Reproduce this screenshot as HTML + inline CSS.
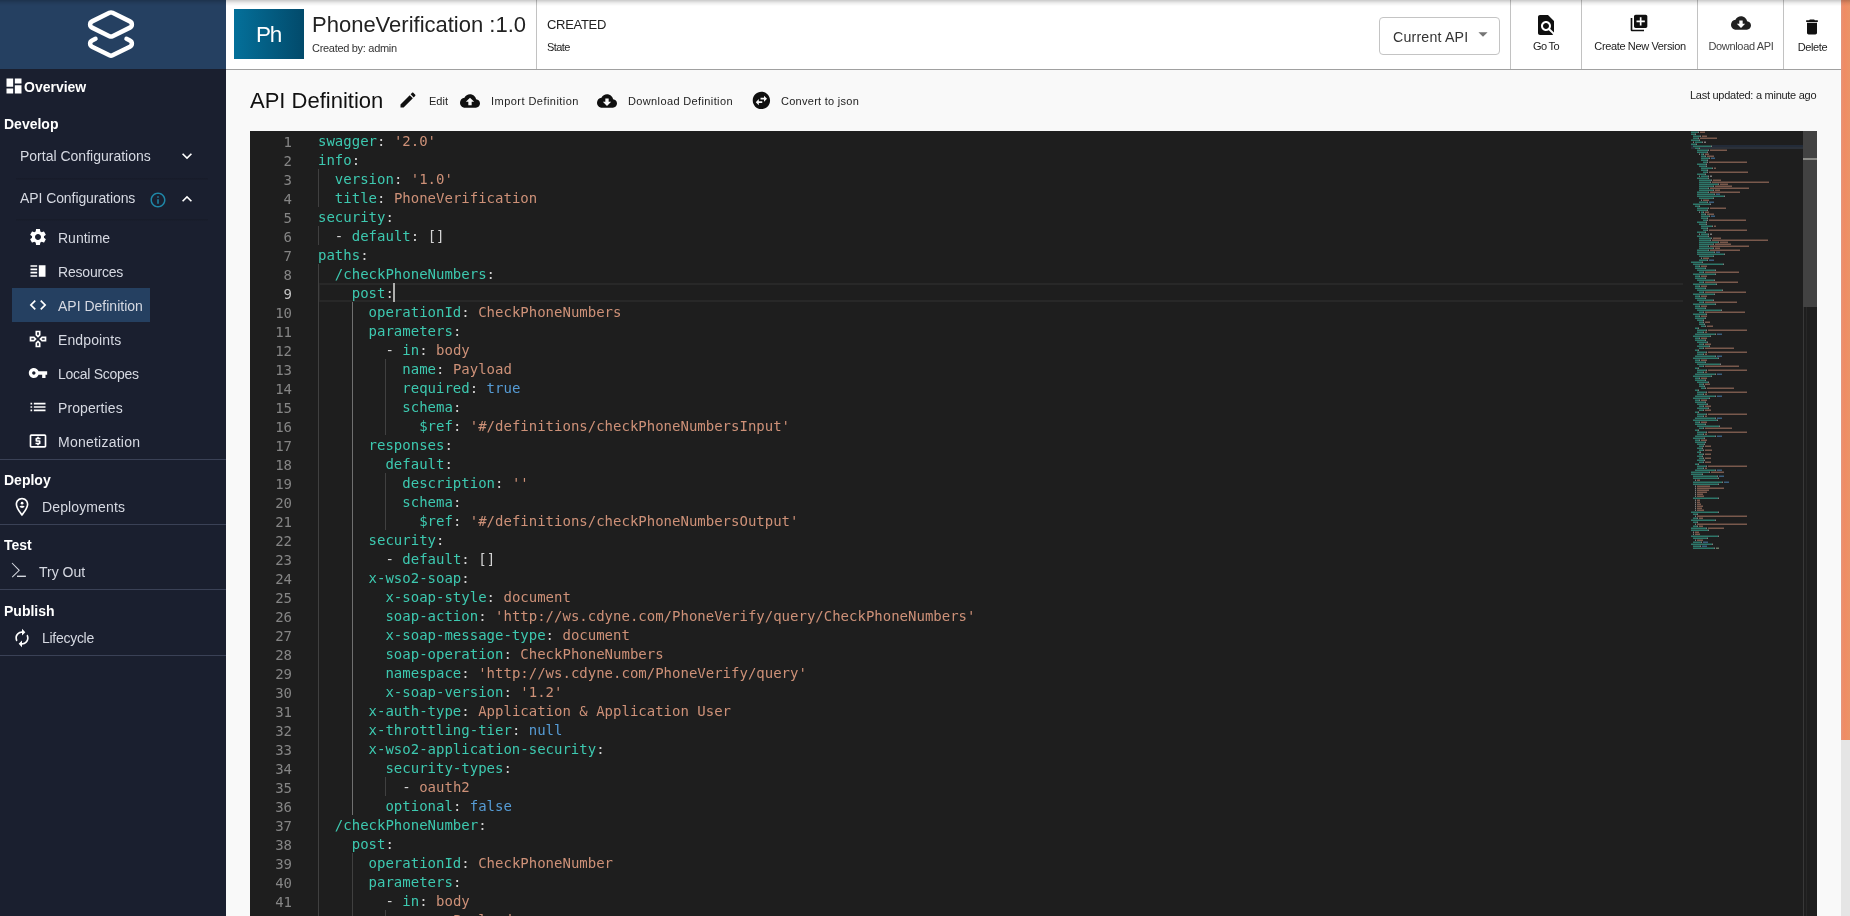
<!DOCTYPE html>
<html lang="en">
<head>
<meta charset="utf-8">
<title>PhoneVerification :1.0 - API Definition</title>
<style>
*{box-sizing:border-box;margin:0;padding:0}
html,body{width:1850px;height:916px;overflow:hidden;background:#f9f9f9}
body{position:relative;font-family:"Liberation Sans","DejaVu Sans",sans-serif;color:#222;font-size:14px}
.abs{position:absolute}
svg{display:block}
/* ---------- sidebar ---------- */
#side{position:absolute;left:0;top:0;width:226px;height:916px;background:#1a1f2f;color:#fff}
#logo{position:absolute;left:0;top:0;width:226px;height:69px;background:#254061}
.sec{position:absolute;left:4px;font-weight:bold;font-size:14px;line-height:20px;color:#fff;white-space:nowrap}
.item{position:absolute;font-size:14px;line-height:20px;color:#d6d9e2;white-space:nowrap}
.ico{position:absolute;fill:#fff}
.hr{position:absolute;left:0;width:226px;height:1px;background:#3a4156}
.sub{position:absolute;left:16px;width:192px;height:2px;background:linear-gradient(#171b29,#191e2d)}
#active{position:absolute;left:12px;top:288px;width:138px;height:34px;background:#254061}
/* ---------- header ---------- */
#head{position:absolute;left:226px;top:0;width:1615px;height:70px;background:#fff;border-bottom:1px solid #a0a0a0}
#topshadow{position:absolute;left:0;top:0;width:1850px;height:6px;background:linear-gradient(to bottom,rgba(0,0,0,.21),rgba(0,0,0,.07) 50%,rgba(0,0,0,0));pointer-events:none;z-index:50}
#thumb{position:absolute;left:8px;top:9px;width:70px;height:50px;background:linear-gradient(to right,#04709a,#024a6b);color:#fff;text-align:center}
.vd{position:absolute;top:0;width:1px;height:69px;background:#c2c2c2}
.t{position:absolute;white-space:nowrap;line-height:1}
.act{position:absolute;font-size:11px;white-space:nowrap;line-height:12px;color:#222;text-align:center}
.dk{fill:#101010}
/* ---------- page scrollbar ---------- */
#sbar{position:absolute;left:1841px;top:0;width:9px;height:916px;background:#e5e5e5}
#sthumb{position:absolute;left:0;top:0;width:9px;height:740px;background:linear-gradient(to right,#e3957c 0,#f08b63 3px,#ea9368 9px)}
/* ---------- editor ---------- */
#ed{position:absolute;left:250px;top:131px;width:1567px;height:785px;background:#1e1e1e;overflow:hidden;
 font-family:"DejaVu Sans Mono","Liberation Mono",monospace;font-size:14px;line-height:19px;color:#d4d4d4}
#nums{position:absolute;left:0;top:2px;width:42px;height:100%}
.no{position:absolute;left:0;width:42px;height:19px;text-align:right;color:#858585}
.no.cur{color:#c6c6c6}
#code{position:absolute;left:68px;top:1px;width:1380px;height:100%}
#guides{position:absolute;left:68px;top:0;width:400px;height:100%}
.ln{position:absolute;left:0;height:19px;white-space:pre}
.k{color:#3dc9b0}.s{color:#ce9178}.w{color:#569cd6}.n{color:#b5cea8}.d{color:#d4d4d4}
.g{position:absolute;width:1px;background:#404040}
.ga{background:#707070}
#curline{position:absolute;left:68px;top:152px;width:1365px;height:19px;border:2px solid #282828;border-right:0}
#caret{position:absolute;left:142.900px;top:152px;width:2px;height:19px;background:#aeafad}
#mm{position:absolute;left:1441px;top:0}
#vs{position:absolute;left:1553px;top:0;width:14px;height:785px;border-left:1px solid #383838}
#vsl{position:absolute;left:-1px;top:0;width:14px;height:176px;background:#424242}
#vmark{position:absolute;left:-1px;top:27px;width:14px;height:2px;background:#8c8c88}
</style>
</head>
<body>

<!-- ================= SIDEBAR ================= -->
<div id="side">
  <div id="logo">
    <svg class="abs" style="left:84px;top:6px" width="54" height="56" viewBox="0 0 54 56" fill="none" stroke="#fff" stroke-width="4.5" stroke-linejoin="round" stroke-linecap="round">
      <path d="M25.45 6.81 A3.5 3.5 0 0 1 28.55 6.81 L45.92 15.36 A3.5 3.5 0 0 1 45.92 21.64 L28.55 30.19 A3.5 3.5 0 0 1 25.45 30.19 L8.08 21.64 A3.5 3.5 0 0 1 8.08 15.36 Z"/>
      <path d="M11.5 32.78 L8.08 34.46 A3.5 3.5 0 0 0 8.08 40.74 L25.45 49.29 A3.5 3.5 0 0 0 28.55 49.29 L45.92 40.74 A3.5 3.5 0 0 0 45.92 34.46 L42.5 32.78"/>
    </svg>
  </div>

  <svg class="ico" style="left:4px;top:76px" width="20" height="20" viewBox="0 0 24 24"><path d="M3 13h8V3H3v10zm0 8h8v-6H3v6zm10 0h8V11h-8v10zm0-18v6h8V3h-8z"/></svg>
  <div class="item" style="left:24px;top:77px;font-weight:bold;color:#fff">Overview</div>

  <div class="sec" style="top:114px">Develop</div>

  <div class="item" style="left:20px;top:146px">Portal Configurations</div>
  <svg class="ico" style="left:177px;top:146px" width="20" height="20" viewBox="0 0 24 24"><path d="M16.59 8.59L12 13.17 7.41 8.59 6 10l6 6 6-6z"/></svg>
  <div class="sub" style="top:178px"></div>

  <div class="item" style="left:20px;top:188px;letter-spacing:-.08px">API Configurations</div>
  <svg class="ico" style="left:148.700px;top:190.700px;fill:#1f86a6" width="18" height="18" viewBox="0 0 24 24"><path d="M11 7h2v2h-2zm0 4h2v6h-2zm1-9C6.48 2 2 6.48 2 12s4.48 10 10 10 10-4.48 10-10S17.52 2 12 2zm0 18c-4.41 0-8-3.590-8-8s3.590-8 8-8 8 3.590 8 8-3.590 8-8 8z"/></svg>
  <svg class="ico" style="left:177px;top:189px" width="20" height="20" viewBox="0 0 24 24"><path d="M12 8l-6 6 1.41 1.41L12 10.830l4.590 4.580L18 14z"/></svg>
  <div class="sub" style="top:219px"></div>

  <div id="active"></div>

  <!-- Runtime -->
  <svg class="ico" style="left:28px;top:227px" width="20" height="20" viewBox="0 0 24 24"><path d="M19.140 12.940c.040-.3.060-.610.060-.940 0-.320-.020-.640-.070-.940l2.030-1.580c.180-.140.230-.410.120-.610l-1.920-3.320c-.120-.220-.370-.290-.590-.220l-2.390.960c-.5-.380-1.030-.7-1.620-.940l-.360-2.540c-.040-.240-.240-.410-.480-.410h-3.840c-.240 0-.430.170-.470.410l-.360 2.540c-.590.240-1.130.570-1.620.940l-2.390-.960c-.220-.080-.470 0-.590.220L2.740 8.870c-.120.210-.080.470.12.610l2.030 1.580c-.050.3-.090.630-.090.940s.020.640.070.940l-2.030 1.580c-.180.140-.230.410-.12.610l1.920 3.320c.120.220.370.290.590.220l2.390-.960c.5.380 1.030.7 1.620.940l.360 2.540c.050.240.240.410.480.410h3.840c.240 0 .440-.170.470-.410l.360-2.540c.590-.240 1.130-.560 1.620-.940l2.390.960c.220.080.470 0 .590-.220l1.920-3.320c.120-.220.070-.470-.120-.610l-2.010-1.580zM12 15.600c-1.980 0-3.600-1.620-3.600-3.600s1.620-3.600 3.600-3.600 3.600 1.620 3.600 3.600-1.620 3.600-3.600 3.600z"/></svg>
  <div class="item" style="left:58px;top:228px">Runtime</div>

  <!-- Resources -->
  <svg class="ico" style="left:28px;top:261px" width="20" height="20" viewBox="0 0 24 24"><path d="M3 15h8v-2H3v2zm0 4h8v-2H3v2zm0-8h8V9H3v2zm0-6v2h8V5H3zm10 0h8v14h-8V5z"/></svg>
  <div class="item" style="left:58px;top:262px;letter-spacing:-.2px">Resources</div>

  <!-- API Definition -->
  <svg class="ico" style="left:28px;top:295px" width="20" height="20" viewBox="0 0 24 24"><path d="M9.4 16.6L4.8 12l4.6-4.6L8 6l-6 6 6 6 1.4-1.4zm5.2 0l4.6-4.6-4.6-4.6L16 6l6 6-6 6-1.4-1.400z"/></svg>
  <div class="item" style="left:58px;top:296px">API Definition</div>

  <!-- Endpoints -->
  <svg class="ico" style="left:28px;top:329px" width="20" height="20" viewBox="0 0 24 24"><path d="M13 4v2.670l-1 1-1-1V4h2m7 7v2h-2.670l-1-1 1-1H20M6.670 11l1 1-1 1H4v-2h2.670M12 16.330l1 1V20h-2v-2.670l1-1M15 2H9v5.500l3 3 3-3V2zm7 7h-5.500l-3 3 3 3H22V9zM7.500 9H2v6h5.500l3-3-3-3zm4.500 4.500l-3 3V22h6v-5.500l-3-3z"/></svg>
  <div class="item" style="left:58px;top:330px;letter-spacing:.12px">Endpoints</div>

  <!-- Local Scopes -->
  <svg class="ico" style="left:28px;top:363px" width="20" height="20" viewBox="0 0 24 24"><path d="M12.650 10C11.830 7.670 9.610 6 7 6c-3.310 0-6 2.690-6 6s2.690 6 6 6c2.610 0 4.830-1.670 5.650-4H17v4h4v-4h2v-4H12.650zM7 14c-1.100 0-2-.9-2-2s.9-2 2-2 2 .9 2 2-.9 2-2 2z"/></svg>
  <div class="item" style="left:58px;top:364px;letter-spacing:-.27px">Local Scopes</div>

  <!-- Properties -->
  <svg class="ico" style="left:28px;top:397px" width="20" height="20" viewBox="0 0 24 24"><path d="M3 13h2v-2H3v2zm0 4h2v-2H3v2zm0-8h2V7H3v2zm4 4h14v-2H7v2zm0 4h14v-2H7v2zM7 7v2h14V7H7z"/></svg>
  <div class="item" style="left:58px;top:398px;letter-spacing:.1px">Properties</div>

  <!-- Monetization -->
  <svg class="ico" style="left:28px;top:431px" width="20" height="20" viewBox="0 0 24 24"><path d="M11 17h2v-1h1c.55 0 1-.45 1-1v-3c0-.55-.45-1-1-1h-3v-1h4V8h-2V7h-2v1h-1c-.55 0-1 .45-1 1v3c0 .55.45 1 1 1h3v1H9v2h2v1zm9-13H4c-1.110 0-1.990.890-1.990 2L2 18c0 1.110.890 2 2 2h16c1.110 0 2-.890 2-2V6c0-1.110-.890-2-2-2zm0 14H4V6h16v12z"/></svg>
  <div class="item" style="left:58px;top:432px;letter-spacing:.24px">Monetization</div>

  <div class="hr" style="top:459px"></div>
  <div class="sec" style="top:470px">Deploy</div>
  <svg class="ico" style="left:10.6px;top:496px" width="22" height="22" viewBox="0 0 24 24"><path fill-rule="evenodd" d="M12 2C8.14 2 5 5.14 5 9c0 5.25 7 13 7 13s7-7.75 7-13c0-3.86-3.14-7-7-7zM12 3.800c-2.870 0-5.200 2.330-5.200 5.200 0 2.950 3 7.400 5.200 10.200 2.200-2.800 5.200-7.250 5.200-10.200 0-2.870-2.330-5.200-5.200-5.200z"/><circle cx="12.100" cy="7.900" r="1.500"/><path d="M12.100 10.500c-1.300 0-2.800.560-2.800 1.350.66.720 1.650 1.150 2.800 1.150s2.140-.430 2.800-1.150c0-.790-1.500-1.350-2.800-1.350z"/></svg>
  <div class="item" style="left:42px;top:497px;letter-spacing:.12px">Deployments</div>

  <div class="hr" style="top:524px"></div>
  <div class="sec" style="top:535px">Test</div>
  <svg class="abs" style="left:10px;top:561px" width="20" height="20" viewBox="0 0 20 20" fill="none" stroke="#d4d7df"><path stroke-width="1.05" d="M2 2 L9.200 9.300 L2.200 16.200"/><path stroke-width="1.400" d="M7 15.300 H15.900"/></svg>
  <div class="item" style="left:39px;top:562px">Try Out</div>

  <div class="hr" style="top:589px"></div>
  <div class="sec" style="top:601px">Publish</div>
  <svg class="ico" style="left:12px;top:628px" width="20" height="20" viewBox="0 0 24 24"><path d="M12 6v3l4-4-4-4v3c-4.420 0-8 3.580-8 8 0 1.570.460 3.030 1.240 4.260L6.700 14.800c-.45-.830-.7-1.790-.7-2.800 0-3.310 2.690-6 6-6zm6.760 1.740L17.300 9.200c.44.840.7 1.790.7 2.800 0 3.310-2.690 6-6 6v-3l-4 4 4 4v-3c4.420 0 8-3.580 8-8 0-1.570-.460-3.030-1.240-4.260z"/></svg>
  <div class="item" style="left:42px;top:628px;letter-spacing:-.28px">Lifecycle</div>
  <div class="hr" style="top:655px"></div>
</div>

<!-- ================= HEADER ================= -->
<div id="head">
  <div id="thumb"><span class="t" style="left:22px;top:15px;font-size:22.5px;letter-spacing:-1.3px">Ph</span></div>
  <div class="t" style="left:86px;top:14px;font-size:22px;color:#222">PhoneVerification :1.0</div>
  <div class="t" style="left:86px;top:43px;font-size:11px;letter-spacing:-.3px;color:#333">Created by: admin</div>
  <div class="vd" style="left:310px"></div>
  <div class="t" style="left:321px;top:18px;font-size:13px;letter-spacing:-.3px;color:#222">CREATED</div>
  <div class="t" style="left:321px;top:42px;font-size:11px;letter-spacing:-.6px;color:#222">State</div>

  <div class="abs" style="left:1153px;top:17px;width:121px;height:38px;border:1px solid #c4c4c4;border-radius:4px"></div>
  <div class="t" style="left:1167px;top:30px;font-size:14.2px;letter-spacing:.18px;color:#333">Current API</div>
  <svg class="abs" style="left:1246px;top:23px;fill:#757575" width="22" height="22" viewBox="0 0 24 24"><path d="M7 10l5 5 5-5z"/></svg>

  <div class="vd" style="left:1284px"></div>
  <svg class="abs dk" style="left:1308px;top:13px" width="24" height="24" viewBox="0 0 24 24"><path d="M20 19.590V8l-6-6H6c-1.100 0-1.990.9-1.990 2L4 20c0 1.100.890 2 1.990 2H18c.450 0 .850-.150 1.190-.4l-4.430-4.430c-.8.520-1.740.830-2.760.830-2.760 0-5-2.240-5-5s2.240-5 5-5 5 2.240 5 5c0 1.020-.310 1.960-.830 2.750L20 19.590zM9 13c0 1.660 1.340 3 3 3s3-1.340 3-3-1.340-3-3-3-3 1.340-3 3z"/></svg>
  <div class="act" style="left:1285px;top:40px;width:70px;letter-spacing:-.55px;word-spacing:-.5px">Go To</div>

  <div class="vd" style="left:1355px"></div>
  <svg class="abs dk" style="left:1403px;top:13px" width="20" height="20" viewBox="0 0 24 24"><path d="M4 6H2v14c0 1.100.9 2 2 2h14v-2H4V6zm16-4H8c-1.100 0-2 .9-2 2v12c0 1.100.9 2 2 2h12c1.100 0 2-.9 2-2V4c0-1.100-.9-2-2-2zm-1 9h-4v4h-2v-4H9V9h4V5h2v4h4v2z"/></svg>
  <div class="act" style="left:1356px;top:40px;width:115px;letter-spacing:-.36px;padding-left:1px">Create New Version</div>

  <div class="vd" style="left:1471px"></div>
  <svg class="abs" style="left:1505px;top:13px;fill:#202020" width="20" height="20" viewBox="0 0 24 24"><path d="M19.350 10.040C18.670 6.590 15.640 4 12 4 9.110 4 6.600 5.640 5.350 8.040 2.340 8.360 0 10.910 0 14c0 3.310 2.690 6 6 6h13c2.760 0 5-2.240 5-5 0-2.640-2.050-4.780-4.650-4.960zM17 13l-5 5-5-5h3V9h4v4h3z"/></svg>
  <div class="act" style="left:1472px;top:40px;width:85px;color:#444;letter-spacing:-.33px;padding-left:1px">Download API</div>

  <div class="vd" style="left:1557px"></div>
  <svg class="abs dk" style="left:1576px;top:17px" width="20" height="20" viewBox="0 0 24 24"><path d="M6 19c0 1.100.9 2 2 2h8c1.100 0 2-.9 2-2V7H6v12zM19 4h-3.500l-1-1h-5l-1 1H5v2h14V4z"/></svg>
  <div class="act" style="left:1558px;top:41px;width:56px;letter-spacing:-.35px;padding-left:1px">Delete</div>
</div>

<!-- ================= TITLE BAR ================= -->
<div class="t" style="left:250px;top:90px;font-size:22px;color:#111">API Definition</div>

<svg class="abs dk" style="left:398px;top:90px" width="20" height="20" viewBox="0 0 24 24"><path d="M3 17.250V21h3.750L17.810 9.940l-3.750-3.750L3 17.250zM20.710 7.040c.39-.39.39-1.020 0-1.410l-2.340-2.340c-.39-.39-1.020-.39-1.410 0l-1.830 1.830 3.750 3.750 1.830-1.830z"/></svg>
<div class="t" style="left:429px;top:96px;font-size:11px">Edit</div>

<svg class="abs dk" style="left:460px;top:91px" width="20" height="20" viewBox="0 0 24 24"><path d="M19.350 10.040C18.670 6.590 15.640 4 12 4 9.110 4 6.600 5.640 5.350 8.040 2.340 8.360 0 10.910 0 14c0 3.310 2.690 6 6 6h13c2.760 0 5-2.240 5-5 0-2.640-2.050-4.780-4.650-4.960zM14 13v4h-4v-4H7l5-5 5 5h-3z"/></svg>
<div class="t" style="left:491px;top:96px;font-size:11px;letter-spacing:.46px">Import Definition</div>

<svg class="abs dk" style="left:597px;top:91px" width="20" height="20" viewBox="0 0 24 24"><path d="M19.350 10.040C18.670 6.590 15.640 4 12 4 9.110 4 6.600 5.640 5.350 8.040 2.340 8.360 0 10.910 0 14c0 3.310 2.690 6 6 6h13c2.760 0 5-2.240 5-5 0-2.640-2.050-4.780-4.650-4.960zM17 13l-5 5-5-5h3V9h4v4h3z"/></svg>
<div class="t" style="left:628px;top:96px;font-size:11px;letter-spacing:.37px">Download Definition</div>

<svg class="abs dk" style="left:750.600px;top:90.300px" width="20.800" height="20.800" viewBox="0 0 24 24"><path d="M22 12c0-5.520-4.480-10-10-10S2 6.480 2 12s4.480 10 10 10 10-4.480 10-10zm-7-5.500l3.500 3.500-3.500 3.500V11h-4V9h4V6.500zm-6 11L5.500 14 9 10.500V13h4v2H9v2.500z"/></svg>
<div class="t" style="left:781px;top:96px;font-size:11px;letter-spacing:.27px">Convert to json</div>

<div class="t" style="left:1690px;top:90px;font-size:11px;letter-spacing:-.27px">Last updated: a minute ago</div>

<!-- ================= EDITOR ================= -->
<div id="ed">
  <div id="nums">
<div class="no" style="top:0px">1</div>
<div class="no" style="top:19px">2</div>
<div class="no" style="top:38px">3</div>
<div class="no" style="top:57px">4</div>
<div class="no" style="top:76px">5</div>
<div class="no" style="top:95px">6</div>
<div class="no" style="top:114px">7</div>
<div class="no" style="top:133px">8</div>
<div class="no cur" style="top:152px">9</div>
<div class="no" style="top:171px">10</div>
<div class="no" style="top:190px">11</div>
<div class="no" style="top:209px">12</div>
<div class="no" style="top:228px">13</div>
<div class="no" style="top:247px">14</div>
<div class="no" style="top:266px">15</div>
<div class="no" style="top:285px">16</div>
<div class="no" style="top:304px">17</div>
<div class="no" style="top:323px">18</div>
<div class="no" style="top:342px">19</div>
<div class="no" style="top:361px">20</div>
<div class="no" style="top:380px">21</div>
<div class="no" style="top:399px">22</div>
<div class="no" style="top:418px">23</div>
<div class="no" style="top:437px">24</div>
<div class="no" style="top:456px">25</div>
<div class="no" style="top:475px">26</div>
<div class="no" style="top:494px">27</div>
<div class="no" style="top:513px">28</div>
<div class="no" style="top:532px">29</div>
<div class="no" style="top:551px">30</div>
<div class="no" style="top:570px">31</div>
<div class="no" style="top:589px">32</div>
<div class="no" style="top:608px">33</div>
<div class="no" style="top:627px">34</div>
<div class="no" style="top:646px">35</div>
<div class="no" style="top:665px">36</div>
<div class="no" style="top:684px">37</div>
<div class="no" style="top:703px">38</div>
<div class="no" style="top:722px">39</div>
<div class="no" style="top:741px">40</div>
<div class="no" style="top:760px">41</div>
<div class="no" style="top:779px">42</div>
  </div>
  <div id="curline"></div>
  <div id="guides">
<i class="g" style="left:0.00px;top:38px;height:38px"></i>
<i class="g" style="left:0.00px;top:95px;height:19px"></i>
<i class="g" style="left:0.00px;top:133px;height:665px"></i>
<i class="g ga" style="left:33.71px;top:171px;height:513px"></i>
<i class="g" style="left:33.71px;top:722px;height:76px"></i>
<i class="g" style="left:67.43px;top:228px;height:76px"></i>
<i class="g" style="left:67.43px;top:342px;height:57px"></i>
<i class="g" style="left:67.43px;top:646px;height:19px"></i>
<i class="g" style="left:67.43px;top:779px;height:19px"></i>
  </div>
  <div id="code">
<div class="ln" style="top:0px"><span class="k">swagger</span><span class="d">:</span> <span class="s">'2.0'</span></div>
<div class="ln" style="top:19px"><span class="k">info</span><span class="d">:</span></div>
<div class="ln" style="top:38px">  <span class="k">version</span><span class="d">:</span> <span class="s">'1.0'</span></div>
<div class="ln" style="top:57px">  <span class="k">title</span><span class="d">:</span> <span class="s">PhoneVerification</span></div>
<div class="ln" style="top:76px"><span class="k">security</span><span class="d">:</span></div>
<div class="ln" style="top:95px">  <span class="d">-</span> <span class="k">default</span><span class="d">:</span> <span class="d">[]</span></div>
<div class="ln" style="top:114px"><span class="k">paths</span><span class="d">:</span></div>
<div class="ln" style="top:133px">  <span class="k">/checkPhoneNumbers</span><span class="d">:</span></div>
<div class="ln" style="top:152px">    <span class="k">post</span><span class="d">:</span></div>
<div class="ln" style="top:171px">      <span class="k">operationId</span><span class="d">:</span> <span class="s">CheckPhoneNumbers</span></div>
<div class="ln" style="top:190px">      <span class="k">parameters</span><span class="d">:</span></div>
<div class="ln" style="top:209px">        <span class="d">-</span> <span class="k">in</span><span class="d">:</span> <span class="s">body</span></div>
<div class="ln" style="top:228px">          <span class="k">name</span><span class="d">:</span> <span class="s">Payload</span></div>
<div class="ln" style="top:247px">          <span class="k">required</span><span class="d">:</span> <span class="w">true</span></div>
<div class="ln" style="top:266px">          <span class="k">schema</span><span class="d">:</span></div>
<div class="ln" style="top:285px">            <span class="k">$ref</span><span class="d">:</span> <span class="s">'#/definitions/checkPhoneNumbersInput'</span></div>
<div class="ln" style="top:304px">      <span class="k">responses</span><span class="d">:</span></div>
<div class="ln" style="top:323px">        <span class="k">default</span><span class="d">:</span></div>
<div class="ln" style="top:342px">          <span class="k">description</span><span class="d">:</span> <span class="s">''</span></div>
<div class="ln" style="top:361px">          <span class="k">schema</span><span class="d">:</span></div>
<div class="ln" style="top:380px">            <span class="k">$ref</span><span class="d">:</span> <span class="s">'#/definitions/checkPhoneNumbersOutput'</span></div>
<div class="ln" style="top:399px">      <span class="k">security</span><span class="d">:</span></div>
<div class="ln" style="top:418px">        <span class="d">-</span> <span class="k">default</span><span class="d">:</span> <span class="d">[]</span></div>
<div class="ln" style="top:437px">      <span class="k">x-wso2-soap</span><span class="d">:</span></div>
<div class="ln" style="top:456px">        <span class="k">x-soap-style</span><span class="d">:</span> <span class="s">document</span></div>
<div class="ln" style="top:475px">        <span class="k">soap-action</span><span class="d">:</span> <span class="s">'http://ws.cdyne.com/PhoneVerify/query/CheckPhoneNumbers'</span></div>
<div class="ln" style="top:494px">        <span class="k">x-soap-message-type</span><span class="d">:</span> <span class="s">document</span></div>
<div class="ln" style="top:513px">        <span class="k">soap-operation</span><span class="d">:</span> <span class="s">CheckPhoneNumbers</span></div>
<div class="ln" style="top:532px">        <span class="k">namespace</span><span class="d">:</span> <span class="s">'http://ws.cdyne.com/PhoneVerify/query'</span></div>
<div class="ln" style="top:551px">        <span class="k">x-soap-version</span><span class="d">:</span> <span class="s">'1.2'</span></div>
<div class="ln" style="top:570px">      <span class="k">x-auth-type</span><span class="d">:</span> <span class="s">Application &amp; Application User</span></div>
<div class="ln" style="top:589px">      <span class="k">x-throttling-tier</span><span class="d">:</span> <span class="w">null</span></div>
<div class="ln" style="top:608px">      <span class="k">x-wso2-application-security</span><span class="d">:</span></div>
<div class="ln" style="top:627px">        <span class="k">security-types</span><span class="d">:</span></div>
<div class="ln" style="top:646px">          <span class="d">-</span> <span class="s">oauth2</span></div>
<div class="ln" style="top:665px">        <span class="k">optional</span><span class="d">:</span> <span class="w">false</span></div>
<div class="ln" style="top:684px">  <span class="k">/checkPhoneNumber</span><span class="d">:</span></div>
<div class="ln" style="top:703px">    <span class="k">post</span><span class="d">:</span></div>
<div class="ln" style="top:722px">      <span class="k">operationId</span><span class="d">:</span> <span class="s">CheckPhoneNumber</span></div>
<div class="ln" style="top:741px">      <span class="k">parameters</span><span class="d">:</span></div>
<div class="ln" style="top:760px">        <span class="d">-</span> <span class="k">in</span><span class="d">:</span> <span class="s">body</span></div>
<div class="ln" style="top:779px">          <span class="k">name</span><span class="d">:</span> <span class="s">Payload</span></div>
  </div>
  <div id="caret"></div>
  <svg id="mm" width="112" height="785" viewBox="0 0 112 785" shape-rendering="crispEdges" opacity=".56">
    <rect x="0" y="16" width="112" height="2" fill="#264f78" opacity=".0"/>
<rect x="0" y="0" width="7" height="2" fill="#3dc9b0"/>
<rect x="7" y="0" width="1" height="2" fill="#d4d4d4"/>
<rect x="9" y="0" width="5" height="2" fill="#ce9178"/>
<rect x="0" y="2" width="4" height="2" fill="#3dc9b0"/>
<rect x="4" y="2" width="1" height="2" fill="#d4d4d4"/>
<rect x="2" y="4" width="7" height="2" fill="#3dc9b0"/>
<rect x="9" y="4" width="1" height="2" fill="#d4d4d4"/>
<rect x="11" y="4" width="5" height="2" fill="#ce9178"/>
<rect x="2" y="6" width="5" height="2" fill="#3dc9b0"/>
<rect x="7" y="6" width="1" height="2" fill="#d4d4d4"/>
<rect x="9" y="6" width="17" height="2" fill="#ce9178"/>
<rect x="0" y="8" width="8" height="2" fill="#3dc9b0"/>
<rect x="8" y="8" width="1" height="2" fill="#d4d4d4"/>
<rect x="2" y="10" width="1" height="2" fill="#d4d4d4"/>
<rect x="4" y="10" width="7" height="2" fill="#3dc9b0"/>
<rect x="11" y="10" width="1" height="2" fill="#d4d4d4"/>
<rect x="13" y="10" width="2" height="2" fill="#d4d4d4"/>
<rect x="0" y="12" width="5" height="2" fill="#3dc9b0"/>
<rect x="5" y="12" width="1" height="2" fill="#d4d4d4"/>
<rect x="2" y="14" width="18" height="2" fill="#3dc9b0"/>
<rect x="20" y="14" width="1" height="2" fill="#d4d4d4"/>
<rect x="4" y="16" width="4" height="2" fill="#3dc9b0"/>
<rect x="8" y="16" width="1" height="2" fill="#d4d4d4"/>
<rect x="6" y="18" width="11" height="2" fill="#3dc9b0"/>
<rect x="17" y="18" width="1" height="2" fill="#d4d4d4"/>
<rect x="19" y="18" width="17" height="2" fill="#ce9178"/>
<rect x="6" y="20" width="10" height="2" fill="#3dc9b0"/>
<rect x="16" y="20" width="1" height="2" fill="#d4d4d4"/>
<rect x="8" y="22" width="1" height="2" fill="#d4d4d4"/>
<rect x="10" y="22" width="2" height="2" fill="#3dc9b0"/>
<rect x="12" y="22" width="1" height="2" fill="#d4d4d4"/>
<rect x="14" y="22" width="4" height="2" fill="#ce9178"/>
<rect x="10" y="24" width="4" height="2" fill="#3dc9b0"/>
<rect x="14" y="24" width="1" height="2" fill="#d4d4d4"/>
<rect x="16" y="24" width="7" height="2" fill="#ce9178"/>
<rect x="10" y="26" width="8" height="2" fill="#3dc9b0"/>
<rect x="18" y="26" width="1" height="2" fill="#d4d4d4"/>
<rect x="20" y="26" width="4" height="2" fill="#569cd6"/>
<rect x="10" y="28" width="6" height="2" fill="#3dc9b0"/>
<rect x="16" y="28" width="1" height="2" fill="#d4d4d4"/>
<rect x="12" y="30" width="4" height="2" fill="#3dc9b0"/>
<rect x="16" y="30" width="1" height="2" fill="#d4d4d4"/>
<rect x="18" y="30" width="38" height="2" fill="#ce9178"/>
<rect x="6" y="32" width="9" height="2" fill="#3dc9b0"/>
<rect x="15" y="32" width="1" height="2" fill="#d4d4d4"/>
<rect x="8" y="34" width="7" height="2" fill="#3dc9b0"/>
<rect x="15" y="34" width="1" height="2" fill="#d4d4d4"/>
<rect x="10" y="36" width="11" height="2" fill="#3dc9b0"/>
<rect x="21" y="36" width="1" height="2" fill="#d4d4d4"/>
<rect x="23" y="36" width="2" height="2" fill="#ce9178"/>
<rect x="10" y="38" width="6" height="2" fill="#3dc9b0"/>
<rect x="16" y="38" width="1" height="2" fill="#d4d4d4"/>
<rect x="12" y="40" width="4" height="2" fill="#3dc9b0"/>
<rect x="16" y="40" width="1" height="2" fill="#d4d4d4"/>
<rect x="18" y="40" width="39" height="2" fill="#ce9178"/>
<rect x="6" y="42" width="8" height="2" fill="#3dc9b0"/>
<rect x="14" y="42" width="1" height="2" fill="#d4d4d4"/>
<rect x="8" y="44" width="1" height="2" fill="#d4d4d4"/>
<rect x="10" y="44" width="7" height="2" fill="#3dc9b0"/>
<rect x="17" y="44" width="1" height="2" fill="#d4d4d4"/>
<rect x="19" y="44" width="2" height="2" fill="#d4d4d4"/>
<rect x="6" y="46" width="11" height="2" fill="#3dc9b0"/>
<rect x="17" y="46" width="1" height="2" fill="#d4d4d4"/>
<rect x="8" y="48" width="12" height="2" fill="#3dc9b0"/>
<rect x="20" y="48" width="1" height="2" fill="#d4d4d4"/>
<rect x="22" y="48" width="8" height="2" fill="#ce9178"/>
<rect x="8" y="50" width="11" height="2" fill="#3dc9b0"/>
<rect x="19" y="50" width="1" height="2" fill="#d4d4d4"/>
<rect x="21" y="50" width="57" height="2" fill="#ce9178"/>
<rect x="8" y="52" width="19" height="2" fill="#3dc9b0"/>
<rect x="27" y="52" width="1" height="2" fill="#d4d4d4"/>
<rect x="29" y="52" width="8" height="2" fill="#ce9178"/>
<rect x="8" y="54" width="14" height="2" fill="#3dc9b0"/>
<rect x="22" y="54" width="1" height="2" fill="#d4d4d4"/>
<rect x="24" y="54" width="17" height="2" fill="#ce9178"/>
<rect x="8" y="56" width="9" height="2" fill="#3dc9b0"/>
<rect x="17" y="56" width="1" height="2" fill="#d4d4d4"/>
<rect x="19" y="56" width="39" height="2" fill="#ce9178"/>
<rect x="8" y="58" width="14" height="2" fill="#3dc9b0"/>
<rect x="22" y="58" width="1" height="2" fill="#d4d4d4"/>
<rect x="24" y="58" width="5" height="2" fill="#ce9178"/>
<rect x="6" y="60" width="11" height="2" fill="#3dc9b0"/>
<rect x="17" y="60" width="1" height="2" fill="#d4d4d4"/>
<rect x="19" y="60" width="30" height="2" fill="#ce9178"/>
<rect x="6" y="62" width="17" height="2" fill="#3dc9b0"/>
<rect x="23" y="62" width="1" height="2" fill="#d4d4d4"/>
<rect x="25" y="62" width="4" height="2" fill="#569cd6"/>
<rect x="6" y="64" width="27" height="2" fill="#3dc9b0"/>
<rect x="33" y="64" width="1" height="2" fill="#d4d4d4"/>
<rect x="8" y="66" width="14" height="2" fill="#3dc9b0"/>
<rect x="22" y="66" width="1" height="2" fill="#d4d4d4"/>
<rect x="10" y="68" width="1" height="2" fill="#d4d4d4"/>
<rect x="12" y="68" width="6" height="2" fill="#ce9178"/>
<rect x="8" y="70" width="8" height="2" fill="#3dc9b0"/>
<rect x="16" y="70" width="1" height="2" fill="#d4d4d4"/>
<rect x="18" y="70" width="5" height="2" fill="#569cd6"/>
<rect x="2" y="72" width="17" height="2" fill="#3dc9b0"/>
<rect x="19" y="72" width="1" height="2" fill="#d4d4d4"/>
<rect x="4" y="74" width="4" height="2" fill="#3dc9b0"/>
<rect x="8" y="74" width="1" height="2" fill="#d4d4d4"/>
<rect x="6" y="76" width="11" height="2" fill="#3dc9b0"/>
<rect x="17" y="76" width="1" height="2" fill="#d4d4d4"/>
<rect x="19" y="76" width="16" height="2" fill="#ce9178"/>
<rect x="6" y="78" width="10" height="2" fill="#3dc9b0"/>
<rect x="16" y="78" width="1" height="2" fill="#d4d4d4"/>
<rect x="8" y="80" width="1" height="2" fill="#d4d4d4"/>
<rect x="10" y="80" width="2" height="2" fill="#3dc9b0"/>
<rect x="12" y="80" width="1" height="2" fill="#d4d4d4"/>
<rect x="14" y="80" width="4" height="2" fill="#ce9178"/>
<rect x="10" y="82" width="4" height="2" fill="#3dc9b0"/>
<rect x="14" y="82" width="1" height="2" fill="#d4d4d4"/>
<rect x="16" y="82" width="7" height="2" fill="#ce9178"/>
<rect x="10" y="84" width="8" height="2" fill="#3dc9b0"/>
<rect x="18" y="84" width="1" height="2" fill="#d4d4d4"/>
<rect x="20" y="84" width="4" height="2" fill="#569cd6"/>
<rect x="10" y="86" width="6" height="2" fill="#3dc9b0"/>
<rect x="16" y="86" width="1" height="2" fill="#d4d4d4"/>
<rect x="12" y="88" width="4" height="2" fill="#3dc9b0"/>
<rect x="16" y="88" width="1" height="2" fill="#d4d4d4"/>
<rect x="18" y="88" width="37" height="2" fill="#ce9178"/>
<rect x="6" y="90" width="9" height="2" fill="#3dc9b0"/>
<rect x="15" y="90" width="1" height="2" fill="#d4d4d4"/>
<rect x="8" y="92" width="7" height="2" fill="#3dc9b0"/>
<rect x="15" y="92" width="1" height="2" fill="#d4d4d4"/>
<rect x="10" y="94" width="11" height="2" fill="#3dc9b0"/>
<rect x="21" y="94" width="1" height="2" fill="#d4d4d4"/>
<rect x="23" y="94" width="2" height="2" fill="#ce9178"/>
<rect x="10" y="96" width="6" height="2" fill="#3dc9b0"/>
<rect x="16" y="96" width="1" height="2" fill="#d4d4d4"/>
<rect x="12" y="98" width="4" height="2" fill="#3dc9b0"/>
<rect x="16" y="98" width="1" height="2" fill="#d4d4d4"/>
<rect x="18" y="98" width="38" height="2" fill="#ce9178"/>
<rect x="6" y="100" width="8" height="2" fill="#3dc9b0"/>
<rect x="14" y="100" width="1" height="2" fill="#d4d4d4"/>
<rect x="8" y="102" width="1" height="2" fill="#d4d4d4"/>
<rect x="10" y="102" width="7" height="2" fill="#3dc9b0"/>
<rect x="17" y="102" width="1" height="2" fill="#d4d4d4"/>
<rect x="19" y="102" width="2" height="2" fill="#d4d4d4"/>
<rect x="6" y="104" width="11" height="2" fill="#3dc9b0"/>
<rect x="17" y="104" width="1" height="2" fill="#d4d4d4"/>
<rect x="8" y="106" width="12" height="2" fill="#3dc9b0"/>
<rect x="20" y="106" width="1" height="2" fill="#d4d4d4"/>
<rect x="22" y="106" width="8" height="2" fill="#ce9178"/>
<rect x="8" y="108" width="11" height="2" fill="#3dc9b0"/>
<rect x="19" y="108" width="1" height="2" fill="#d4d4d4"/>
<rect x="21" y="108" width="56" height="2" fill="#ce9178"/>
<rect x="8" y="110" width="19" height="2" fill="#3dc9b0"/>
<rect x="27" y="110" width="1" height="2" fill="#d4d4d4"/>
<rect x="29" y="110" width="8" height="2" fill="#ce9178"/>
<rect x="8" y="112" width="14" height="2" fill="#3dc9b0"/>
<rect x="22" y="112" width="1" height="2" fill="#d4d4d4"/>
<rect x="24" y="112" width="16" height="2" fill="#ce9178"/>
<rect x="8" y="114" width="9" height="2" fill="#3dc9b0"/>
<rect x="17" y="114" width="1" height="2" fill="#d4d4d4"/>
<rect x="19" y="114" width="39" height="2" fill="#ce9178"/>
<rect x="8" y="116" width="14" height="2" fill="#3dc9b0"/>
<rect x="22" y="116" width="1" height="2" fill="#d4d4d4"/>
<rect x="24" y="116" width="5" height="2" fill="#ce9178"/>
<rect x="6" y="118" width="11" height="2" fill="#3dc9b0"/>
<rect x="17" y="118" width="1" height="2" fill="#d4d4d4"/>
<rect x="19" y="118" width="30" height="2" fill="#ce9178"/>
<rect x="6" y="120" width="17" height="2" fill="#3dc9b0"/>
<rect x="23" y="120" width="1" height="2" fill="#d4d4d4"/>
<rect x="25" y="120" width="4" height="2" fill="#569cd6"/>
<rect x="6" y="122" width="27" height="2" fill="#3dc9b0"/>
<rect x="33" y="122" width="1" height="2" fill="#d4d4d4"/>
<rect x="8" y="124" width="14" height="2" fill="#3dc9b0"/>
<rect x="22" y="124" width="1" height="2" fill="#d4d4d4"/>
<rect x="10" y="126" width="1" height="2" fill="#d4d4d4"/>
<rect x="12" y="126" width="6" height="2" fill="#ce9178"/>
<rect x="8" y="128" width="8" height="2" fill="#3dc9b0"/>
<rect x="16" y="128" width="1" height="2" fill="#d4d4d4"/>
<rect x="18" y="128" width="5" height="2" fill="#569cd6"/>
<rect x="0" y="130" width="11" height="2" fill="#3dc9b0"/>
<rect x="11" y="130" width="1" height="2" fill="#d4d4d4"/>
<rect x="2" y="132" width="30" height="2" fill="#3dc9b0"/>
<rect x="32" y="132" width="1" height="2" fill="#d4d4d4"/>
<rect x="4" y="134" width="4" height="2" fill="#3dc9b0"/>
<rect x="8" y="134" width="1" height="2" fill="#d4d4d4"/>
<rect x="10" y="134" width="6" height="2" fill="#ce9178"/>
<rect x="4" y="136" width="10" height="2" fill="#3dc9b0"/>
<rect x="14" y="136" width="1" height="2" fill="#d4d4d4"/>
<rect x="6" y="138" width="18" height="2" fill="#3dc9b0"/>
<rect x="24" y="138" width="1" height="2" fill="#d4d4d4"/>
<rect x="8" y="140" width="4" height="2" fill="#3dc9b0"/>
<rect x="12" y="140" width="1" height="2" fill="#d4d4d4"/>
<rect x="14" y="140" width="34" height="2" fill="#ce9178"/>
<rect x="2" y="142" width="22" height="2" fill="#3dc9b0"/>
<rect x="24" y="142" width="1" height="2" fill="#d4d4d4"/>
<rect x="4" y="144" width="4" height="2" fill="#3dc9b0"/>
<rect x="8" y="144" width="1" height="2" fill="#d4d4d4"/>
<rect x="10" y="144" width="6" height="2" fill="#ce9178"/>
<rect x="4" y="146" width="10" height="2" fill="#3dc9b0"/>
<rect x="14" y="146" width="1" height="2" fill="#d4d4d4"/>
<rect x="6" y="148" width="17" height="2" fill="#3dc9b0"/>
<rect x="23" y="148" width="1" height="2" fill="#d4d4d4"/>
<rect x="8" y="150" width="4" height="2" fill="#3dc9b0"/>
<rect x="12" y="150" width="1" height="2" fill="#d4d4d4"/>
<rect x="14" y="150" width="33" height="2" fill="#ce9178"/>
<rect x="2" y="152" width="23" height="2" fill="#3dc9b0"/>
<rect x="25" y="152" width="1" height="2" fill="#d4d4d4"/>
<rect x="4" y="154" width="4" height="2" fill="#3dc9b0"/>
<rect x="8" y="154" width="1" height="2" fill="#d4d4d4"/>
<rect x="10" y="154" width="6" height="2" fill="#ce9178"/>
<rect x="4" y="156" width="10" height="2" fill="#3dc9b0"/>
<rect x="14" y="156" width="1" height="2" fill="#d4d4d4"/>
<rect x="6" y="158" width="25" height="2" fill="#3dc9b0"/>
<rect x="31" y="158" width="1" height="2" fill="#d4d4d4"/>
<rect x="8" y="160" width="4" height="2" fill="#3dc9b0"/>
<rect x="12" y="160" width="1" height="2" fill="#d4d4d4"/>
<rect x="14" y="160" width="41" height="2" fill="#ce9178"/>
<rect x="2" y="162" width="21" height="2" fill="#3dc9b0"/>
<rect x="23" y="162" width="1" height="2" fill="#d4d4d4"/>
<rect x="4" y="164" width="4" height="2" fill="#3dc9b0"/>
<rect x="8" y="164" width="1" height="2" fill="#d4d4d4"/>
<rect x="10" y="164" width="6" height="2" fill="#ce9178"/>
<rect x="4" y="166" width="10" height="2" fill="#3dc9b0"/>
<rect x="14" y="166" width="1" height="2" fill="#d4d4d4"/>
<rect x="6" y="168" width="16" height="2" fill="#3dc9b0"/>
<rect x="22" y="168" width="1" height="2" fill="#d4d4d4"/>
<rect x="8" y="170" width="4" height="2" fill="#3dc9b0"/>
<rect x="12" y="170" width="1" height="2" fill="#d4d4d4"/>
<rect x="14" y="170" width="32" height="2" fill="#ce9178"/>
<rect x="2" y="172" width="22" height="2" fill="#3dc9b0"/>
<rect x="24" y="172" width="1" height="2" fill="#d4d4d4"/>
<rect x="4" y="174" width="4" height="2" fill="#3dc9b0"/>
<rect x="8" y="174" width="1" height="2" fill="#d4d4d4"/>
<rect x="10" y="174" width="6" height="2" fill="#ce9178"/>
<rect x="4" y="176" width="10" height="2" fill="#3dc9b0"/>
<rect x="14" y="176" width="1" height="2" fill="#d4d4d4"/>
<rect x="6" y="178" width="24" height="2" fill="#3dc9b0"/>
<rect x="30" y="178" width="1" height="2" fill="#d4d4d4"/>
<rect x="8" y="180" width="4" height="2" fill="#3dc9b0"/>
<rect x="12" y="180" width="1" height="2" fill="#d4d4d4"/>
<rect x="14" y="180" width="40" height="2" fill="#ce9178"/>
<rect x="2" y="182" width="13" height="2" fill="#3dc9b0"/>
<rect x="15" y="182" width="1" height="2" fill="#d4d4d4"/>
<rect x="4" y="184" width="4" height="2" fill="#3dc9b0"/>
<rect x="8" y="184" width="1" height="2" fill="#d4d4d4"/>
<rect x="10" y="184" width="6" height="2" fill="#ce9178"/>
<rect x="4" y="186" width="10" height="2" fill="#3dc9b0"/>
<rect x="14" y="186" width="1" height="2" fill="#d4d4d4"/>
<rect x="6" y="188" width="6" height="2" fill="#3dc9b0"/>
<rect x="12" y="188" width="1" height="2" fill="#d4d4d4"/>
<rect x="8" y="190" width="4" height="2" fill="#3dc9b0"/>
<rect x="12" y="190" width="1" height="2" fill="#d4d4d4"/>
<rect x="14" y="190" width="5" height="2" fill="#ce9178"/>
<rect x="8" y="192" width="5" height="2" fill="#3dc9b0"/>
<rect x="13" y="192" width="1" height="2" fill="#d4d4d4"/>
<rect x="10" y="194" width="4" height="2" fill="#3dc9b0"/>
<rect x="14" y="194" width="1" height="2" fill="#d4d4d4"/>
<rect x="16" y="194" width="6" height="2" fill="#ce9178"/>
<rect x="4" y="196" width="3" height="2" fill="#3dc9b0"/>
<rect x="7" y="196" width="1" height="2" fill="#d4d4d4"/>
<rect x="6" y="198" width="9" height="2" fill="#3dc9b0"/>
<rect x="15" y="198" width="1" height="2" fill="#d4d4d4"/>
<rect x="17" y="198" width="39" height="2" fill="#ce9178"/>
<rect x="6" y="200" width="6" height="2" fill="#3dc9b0"/>
<rect x="12" y="200" width="1" height="2" fill="#d4d4d4"/>
<rect x="14" y="200" width="2" height="2" fill="#ce9178"/>
<rect x="4" y="202" width="20" height="2" fill="#3dc9b0"/>
<rect x="24" y="202" width="1" height="2" fill="#d4d4d4"/>
<rect x="26" y="202" width="5" height="2" fill="#569cd6"/>
<rect x="2" y="204" width="17" height="2" fill="#3dc9b0"/>
<rect x="19" y="204" width="1" height="2" fill="#d4d4d4"/>
<rect x="4" y="206" width="4" height="2" fill="#3dc9b0"/>
<rect x="8" y="206" width="1" height="2" fill="#d4d4d4"/>
<rect x="10" y="206" width="6" height="2" fill="#ce9178"/>
<rect x="4" y="208" width="10" height="2" fill="#3dc9b0"/>
<rect x="14" y="208" width="1" height="2" fill="#d4d4d4"/>
<rect x="6" y="210" width="10" height="2" fill="#3dc9b0"/>
<rect x="16" y="210" width="1" height="2" fill="#d4d4d4"/>
<rect x="8" y="212" width="4" height="2" fill="#3dc9b0"/>
<rect x="12" y="212" width="1" height="2" fill="#d4d4d4"/>
<rect x="14" y="212" width="6" height="2" fill="#ce9178"/>
<rect x="6" y="214" width="12" height="2" fill="#3dc9b0"/>
<rect x="18" y="214" width="1" height="2" fill="#d4d4d4"/>
<rect x="8" y="216" width="4" height="2" fill="#3dc9b0"/>
<rect x="12" y="216" width="1" height="2" fill="#d4d4d4"/>
<rect x="14" y="216" width="29" height="2" fill="#ce9178"/>
<rect x="4" y="218" width="3" height="2" fill="#3dc9b0"/>
<rect x="7" y="218" width="1" height="2" fill="#d4d4d4"/>
<rect x="6" y="220" width="9" height="2" fill="#3dc9b0"/>
<rect x="15" y="220" width="1" height="2" fill="#d4d4d4"/>
<rect x="17" y="220" width="39" height="2" fill="#ce9178"/>
<rect x="6" y="222" width="6" height="2" fill="#3dc9b0"/>
<rect x="12" y="222" width="1" height="2" fill="#d4d4d4"/>
<rect x="14" y="222" width="2" height="2" fill="#ce9178"/>
<rect x="4" y="224" width="20" height="2" fill="#3dc9b0"/>
<rect x="24" y="224" width="1" height="2" fill="#d4d4d4"/>
<rect x="26" y="224" width="5" height="2" fill="#569cd6"/>
<rect x="2" y="226" width="25" height="2" fill="#3dc9b0"/>
<rect x="27" y="226" width="1" height="2" fill="#d4d4d4"/>
<rect x="4" y="228" width="4" height="2" fill="#3dc9b0"/>
<rect x="8" y="228" width="1" height="2" fill="#d4d4d4"/>
<rect x="10" y="228" width="6" height="2" fill="#ce9178"/>
<rect x="4" y="230" width="10" height="2" fill="#3dc9b0"/>
<rect x="14" y="230" width="1" height="2" fill="#d4d4d4"/>
<rect x="6" y="232" width="23" height="2" fill="#3dc9b0"/>
<rect x="29" y="232" width="1" height="2" fill="#d4d4d4"/>
<rect x="8" y="234" width="4" height="2" fill="#3dc9b0"/>
<rect x="12" y="234" width="1" height="2" fill="#d4d4d4"/>
<rect x="14" y="234" width="34" height="2" fill="#ce9178"/>
<rect x="4" y="236" width="3" height="2" fill="#3dc9b0"/>
<rect x="7" y="236" width="1" height="2" fill="#d4d4d4"/>
<rect x="6" y="238" width="9" height="2" fill="#3dc9b0"/>
<rect x="15" y="238" width="1" height="2" fill="#d4d4d4"/>
<rect x="17" y="238" width="39" height="2" fill="#ce9178"/>
<rect x="6" y="240" width="6" height="2" fill="#3dc9b0"/>
<rect x="12" y="240" width="1" height="2" fill="#d4d4d4"/>
<rect x="14" y="240" width="2" height="2" fill="#ce9178"/>
<rect x="4" y="242" width="20" height="2" fill="#3dc9b0"/>
<rect x="24" y="242" width="1" height="2" fill="#d4d4d4"/>
<rect x="26" y="242" width="5" height="2" fill="#569cd6"/>
<rect x="2" y="244" width="18" height="2" fill="#3dc9b0"/>
<rect x="20" y="244" width="1" height="2" fill="#d4d4d4"/>
<rect x="4" y="246" width="4" height="2" fill="#3dc9b0"/>
<rect x="8" y="246" width="1" height="2" fill="#d4d4d4"/>
<rect x="10" y="246" width="6" height="2" fill="#ce9178"/>
<rect x="4" y="248" width="10" height="2" fill="#3dc9b0"/>
<rect x="14" y="248" width="1" height="2" fill="#d4d4d4"/>
<rect x="6" y="250" width="11" height="2" fill="#3dc9b0"/>
<rect x="17" y="250" width="1" height="2" fill="#d4d4d4"/>
<rect x="8" y="252" width="4" height="2" fill="#3dc9b0"/>
<rect x="12" y="252" width="1" height="2" fill="#d4d4d4"/>
<rect x="14" y="252" width="5" height="2" fill="#ce9178"/>
<rect x="8" y="254" width="5" height="2" fill="#3dc9b0"/>
<rect x="13" y="254" width="1" height="2" fill="#d4d4d4"/>
<rect x="10" y="256" width="4" height="2" fill="#3dc9b0"/>
<rect x="14" y="256" width="1" height="2" fill="#d4d4d4"/>
<rect x="16" y="256" width="27" height="2" fill="#ce9178"/>
<rect x="4" y="258" width="3" height="2" fill="#3dc9b0"/>
<rect x="7" y="258" width="1" height="2" fill="#d4d4d4"/>
<rect x="6" y="260" width="9" height="2" fill="#3dc9b0"/>
<rect x="15" y="260" width="1" height="2" fill="#d4d4d4"/>
<rect x="17" y="260" width="39" height="2" fill="#ce9178"/>
<rect x="6" y="262" width="6" height="2" fill="#3dc9b0"/>
<rect x="12" y="262" width="1" height="2" fill="#d4d4d4"/>
<rect x="14" y="262" width="2" height="2" fill="#ce9178"/>
<rect x="4" y="264" width="20" height="2" fill="#3dc9b0"/>
<rect x="24" y="264" width="1" height="2" fill="#d4d4d4"/>
<rect x="26" y="264" width="5" height="2" fill="#569cd6"/>
<rect x="2" y="266" width="16" height="2" fill="#3dc9b0"/>
<rect x="18" y="266" width="1" height="2" fill="#d4d4d4"/>
<rect x="4" y="268" width="4" height="2" fill="#3dc9b0"/>
<rect x="8" y="268" width="1" height="2" fill="#d4d4d4"/>
<rect x="10" y="268" width="6" height="2" fill="#ce9178"/>
<rect x="4" y="270" width="10" height="2" fill="#3dc9b0"/>
<rect x="14" y="270" width="1" height="2" fill="#d4d4d4"/>
<rect x="6" y="272" width="10" height="2" fill="#3dc9b0"/>
<rect x="16" y="272" width="1" height="2" fill="#d4d4d4"/>
<rect x="8" y="274" width="4" height="2" fill="#3dc9b0"/>
<rect x="12" y="274" width="1" height="2" fill="#d4d4d4"/>
<rect x="14" y="274" width="6" height="2" fill="#ce9178"/>
<rect x="6" y="276" width="11" height="2" fill="#3dc9b0"/>
<rect x="17" y="276" width="1" height="2" fill="#d4d4d4"/>
<rect x="8" y="278" width="4" height="2" fill="#3dc9b0"/>
<rect x="12" y="278" width="1" height="2" fill="#d4d4d4"/>
<rect x="14" y="278" width="6" height="2" fill="#ce9178"/>
<rect x="4" y="280" width="3" height="2" fill="#3dc9b0"/>
<rect x="7" y="280" width="1" height="2" fill="#d4d4d4"/>
<rect x="6" y="282" width="9" height="2" fill="#3dc9b0"/>
<rect x="15" y="282" width="1" height="2" fill="#d4d4d4"/>
<rect x="17" y="282" width="39" height="2" fill="#ce9178"/>
<rect x="6" y="284" width="6" height="2" fill="#3dc9b0"/>
<rect x="12" y="284" width="1" height="2" fill="#d4d4d4"/>
<rect x="14" y="284" width="2" height="2" fill="#ce9178"/>
<rect x="4" y="286" width="20" height="2" fill="#3dc9b0"/>
<rect x="24" y="286" width="1" height="2" fill="#d4d4d4"/>
<rect x="26" y="286" width="5" height="2" fill="#569cd6"/>
<rect x="2" y="288" width="24" height="2" fill="#3dc9b0"/>
<rect x="26" y="288" width="1" height="2" fill="#d4d4d4"/>
<rect x="4" y="290" width="4" height="2" fill="#3dc9b0"/>
<rect x="8" y="290" width="1" height="2" fill="#d4d4d4"/>
<rect x="10" y="290" width="6" height="2" fill="#ce9178"/>
<rect x="4" y="292" width="10" height="2" fill="#3dc9b0"/>
<rect x="14" y="292" width="1" height="2" fill="#d4d4d4"/>
<rect x="6" y="294" width="22" height="2" fill="#3dc9b0"/>
<rect x="28" y="294" width="1" height="2" fill="#d4d4d4"/>
<rect x="8" y="296" width="4" height="2" fill="#3dc9b0"/>
<rect x="12" y="296" width="1" height="2" fill="#d4d4d4"/>
<rect x="14" y="296" width="27" height="2" fill="#ce9178"/>
<rect x="4" y="298" width="3" height="2" fill="#3dc9b0"/>
<rect x="7" y="298" width="1" height="2" fill="#d4d4d4"/>
<rect x="6" y="300" width="9" height="2" fill="#3dc9b0"/>
<rect x="15" y="300" width="1" height="2" fill="#d4d4d4"/>
<rect x="17" y="300" width="39" height="2" fill="#ce9178"/>
<rect x="6" y="302" width="6" height="2" fill="#3dc9b0"/>
<rect x="12" y="302" width="1" height="2" fill="#d4d4d4"/>
<rect x="14" y="302" width="2" height="2" fill="#ce9178"/>
<rect x="4" y="304" width="20" height="2" fill="#3dc9b0"/>
<rect x="24" y="304" width="1" height="2" fill="#d4d4d4"/>
<rect x="26" y="304" width="5" height="2" fill="#569cd6"/>
<rect x="2" y="306" width="11" height="2" fill="#3dc9b0"/>
<rect x="13" y="306" width="1" height="2" fill="#d4d4d4"/>
<rect x="4" y="308" width="4" height="2" fill="#3dc9b0"/>
<rect x="8" y="308" width="1" height="2" fill="#d4d4d4"/>
<rect x="10" y="308" width="6" height="2" fill="#ce9178"/>
<rect x="4" y="310" width="10" height="2" fill="#3dc9b0"/>
<rect x="14" y="310" width="1" height="2" fill="#d4d4d4"/>
<rect x="6" y="312" width="7" height="2" fill="#3dc9b0"/>
<rect x="13" y="312" width="1" height="2" fill="#d4d4d4"/>
<rect x="8" y="314" width="4" height="2" fill="#3dc9b0"/>
<rect x="12" y="314" width="1" height="2" fill="#d4d4d4"/>
<rect x="14" y="314" width="6" height="2" fill="#ce9178"/>
<rect x="6" y="316" width="5" height="2" fill="#3dc9b0"/>
<rect x="11" y="316" width="1" height="2" fill="#d4d4d4"/>
<rect x="8" y="318" width="4" height="2" fill="#3dc9b0"/>
<rect x="12" y="318" width="1" height="2" fill="#d4d4d4"/>
<rect x="14" y="318" width="7" height="2" fill="#ce9178"/>
<rect x="6" y="320" width="3" height="2" fill="#3dc9b0"/>
<rect x="9" y="320" width="1" height="2" fill="#d4d4d4"/>
<rect x="8" y="322" width="4" height="2" fill="#3dc9b0"/>
<rect x="12" y="322" width="1" height="2" fill="#d4d4d4"/>
<rect x="14" y="322" width="6" height="2" fill="#ce9178"/>
<rect x="6" y="324" width="5" height="2" fill="#3dc9b0"/>
<rect x="11" y="324" width="1" height="2" fill="#d4d4d4"/>
<rect x="8" y="326" width="4" height="2" fill="#3dc9b0"/>
<rect x="12" y="326" width="1" height="2" fill="#d4d4d4"/>
<rect x="14" y="326" width="6" height="2" fill="#ce9178"/>
<rect x="6" y="328" width="7" height="2" fill="#3dc9b0"/>
<rect x="13" y="328" width="1" height="2" fill="#d4d4d4"/>
<rect x="8" y="330" width="4" height="2" fill="#3dc9b0"/>
<rect x="12" y="330" width="1" height="2" fill="#d4d4d4"/>
<rect x="14" y="330" width="6" height="2" fill="#ce9178"/>
<rect x="4" y="332" width="3" height="2" fill="#3dc9b0"/>
<rect x="7" y="332" width="1" height="2" fill="#d4d4d4"/>
<rect x="6" y="334" width="9" height="2" fill="#3dc9b0"/>
<rect x="15" y="334" width="1" height="2" fill="#d4d4d4"/>
<rect x="17" y="334" width="39" height="2" fill="#ce9178"/>
<rect x="6" y="336" width="6" height="2" fill="#3dc9b0"/>
<rect x="12" y="336" width="1" height="2" fill="#d4d4d4"/>
<rect x="14" y="336" width="2" height="2" fill="#ce9178"/>
<rect x="4" y="338" width="20" height="2" fill="#3dc9b0"/>
<rect x="24" y="338" width="1" height="2" fill="#d4d4d4"/>
<rect x="26" y="338" width="5" height="2" fill="#569cd6"/>
<rect x="0" y="340" width="18" height="2" fill="#3dc9b0"/>
<rect x="18" y="340" width="1" height="2" fill="#d4d4d4"/>
<rect x="20" y="340" width="13" height="2" fill="#ce9178"/>
<rect x="0" y="342" width="11" height="2" fill="#3dc9b0"/>
<rect x="11" y="342" width="1" height="2" fill="#d4d4d4"/>
<rect x="2" y="344" width="24" height="2" fill="#3dc9b0"/>
<rect x="26" y="344" width="1" height="2" fill="#d4d4d4"/>
<rect x="28" y="344" width="5" height="2" fill="#569cd6"/>
<rect x="2" y="346" width="25" height="2" fill="#3dc9b0"/>
<rect x="27" y="346" width="1" height="2" fill="#d4d4d4"/>
<rect x="4" y="348" width="1" height="2" fill="#d4d4d4"/>
<rect x="6" y="348" width="3" height="2" fill="#ce9178"/>
<rect x="2" y="350" width="29" height="2" fill="#3dc9b0"/>
<rect x="31" y="350" width="1" height="2" fill="#d4d4d4"/>
<rect x="33" y="350" width="5" height="2" fill="#569cd6"/>
<rect x="2" y="352" width="25" height="2" fill="#3dc9b0"/>
<rect x="27" y="352" width="1" height="2" fill="#d4d4d4"/>
<rect x="4" y="354" width="1" height="2" fill="#d4d4d4"/>
<rect x="6" y="354" width="13" height="2" fill="#ce9178"/>
<rect x="4" y="356" width="1" height="2" fill="#d4d4d4"/>
<rect x="6" y="356" width="27" height="2" fill="#ce9178"/>
<rect x="4" y="358" width="1" height="2" fill="#d4d4d4"/>
<rect x="6" y="358" width="12" height="2" fill="#ce9178"/>
<rect x="4" y="360" width="1" height="2" fill="#d4d4d4"/>
<rect x="6" y="360" width="10" height="2" fill="#ce9178"/>
<rect x="4" y="362" width="1" height="2" fill="#d4d4d4"/>
<rect x="6" y="362" width="6" height="2" fill="#ce9178"/>
<rect x="4" y="364" width="1" height="2" fill="#d4d4d4"/>
<rect x="6" y="364" width="7" height="2" fill="#ce9178"/>
<rect x="2" y="366" width="25" height="2" fill="#3dc9b0"/>
<rect x="27" y="366" width="1" height="2" fill="#d4d4d4"/>
<rect x="4" y="368" width="1" height="2" fill="#d4d4d4"/>
<rect x="6" y="368" width="3" height="2" fill="#ce9178"/>
<rect x="4" y="370" width="1" height="2" fill="#d4d4d4"/>
<rect x="6" y="370" width="3" height="2" fill="#ce9178"/>
<rect x="4" y="372" width="1" height="2" fill="#d4d4d4"/>
<rect x="6" y="372" width="4" height="2" fill="#ce9178"/>
<rect x="4" y="374" width="1" height="2" fill="#d4d4d4"/>
<rect x="6" y="374" width="6" height="2" fill="#ce9178"/>
<rect x="4" y="376" width="1" height="2" fill="#d4d4d4"/>
<rect x="6" y="376" width="5" height="2" fill="#ce9178"/>
<rect x="4" y="378" width="1" height="2" fill="#d4d4d4"/>
<rect x="6" y="378" width="7" height="2" fill="#ce9178"/>
<rect x="0" y="380" width="27" height="2" fill="#3dc9b0"/>
<rect x="27" y="380" width="1" height="2" fill="#d4d4d4"/>
<rect x="2" y="382" width="4" height="2" fill="#3dc9b0"/>
<rect x="6" y="382" width="1" height="2" fill="#d4d4d4"/>
<rect x="4" y="384" width="1" height="2" fill="#d4d4d4"/>
<rect x="6" y="384" width="50" height="2" fill="#ce9178"/>
<rect x="2" y="386" width="4" height="2" fill="#3dc9b0"/>
<rect x="6" y="386" width="1" height="2" fill="#d4d4d4"/>
<rect x="8" y="386" width="4" height="2" fill="#ce9178"/>
<rect x="0" y="388" width="24" height="2" fill="#3dc9b0"/>
<rect x="24" y="388" width="1" height="2" fill="#d4d4d4"/>
<rect x="2" y="390" width="4" height="2" fill="#3dc9b0"/>
<rect x="6" y="390" width="1" height="2" fill="#d4d4d4"/>
<rect x="4" y="392" width="1" height="2" fill="#d4d4d4"/>
<rect x="6" y="392" width="50" height="2" fill="#ce9178"/>
<rect x="2" y="394" width="4" height="2" fill="#3dc9b0"/>
<rect x="6" y="394" width="1" height="2" fill="#d4d4d4"/>
<rect x="8" y="394" width="4" height="2" fill="#ce9178"/>
<rect x="0" y="396" width="15" height="2" fill="#3dc9b0"/>
<rect x="15" y="396" width="1" height="2" fill="#d4d4d4"/>
<rect x="17" y="396" width="16" height="2" fill="#ce9178"/>
<rect x="0" y="398" width="17" height="2" fill="#3dc9b0"/>
<rect x="17" y="398" width="1" height="2" fill="#d4d4d4"/>
<rect x="2" y="400" width="1" height="2" fill="#d4d4d4"/>
<rect x="4" y="400" width="4" height="2" fill="#ce9178"/>
<rect x="2" y="402" width="1" height="2" fill="#d4d4d4"/>
<rect x="4" y="402" width="5" height="2" fill="#ce9178"/>
<rect x="0" y="404" width="27" height="2" fill="#3dc9b0"/>
<rect x="27" y="404" width="1" height="2" fill="#d4d4d4"/>
<rect x="2" y="406" width="14" height="2" fill="#3dc9b0"/>
<rect x="16" y="406" width="1" height="2" fill="#d4d4d4"/>
<rect x="4" y="408" width="1" height="2" fill="#d4d4d4"/>
<rect x="6" y="408" width="6" height="2" fill="#ce9178"/>
<rect x="2" y="410" width="8" height="2" fill="#3dc9b0"/>
<rect x="10" y="410" width="1" height="2" fill="#d4d4d4"/>
<rect x="12" y="410" width="5" height="2" fill="#569cd6"/>
<rect x="0" y="412" width="21" height="2" fill="#3dc9b0"/>
<rect x="21" y="412" width="1" height="2" fill="#d4d4d4"/>
<rect x="2" y="414" width="7" height="2" fill="#3dc9b0"/>
<rect x="9" y="414" width="1" height="2" fill="#d4d4d4"/>
<rect x="11" y="414" width="5" height="2" fill="#569cd6"/>
<rect x="2" y="416" width="21" height="2" fill="#3dc9b0"/>
<rect x="23" y="416" width="1" height="2" fill="#d4d4d4"/>
<rect x="25" y="416" width="3" height="2" fill="#b5cea8"/>
  </svg>
  <div class="abs" style="left:1441px;top:0;width:112px;height:424px;background:repeating-linear-gradient(to bottom,rgba(30,30,30,.55) 0,rgba(30,30,30,.55) 1px,rgba(30,30,30,.08) 1px,rgba(30,30,30,.08) 2px)"></div>
  <div class="abs" style="left:1441px;top:14px;width:112px;height:4px;background:linear-gradient(to bottom,#232b38 0,#232b38 2px,#2b3038 2px,#2b3038 4px);mix-blend-mode:lighten"></div>
  <div id="vs"><div id="vsl"></div><div id="vmark"></div><div class="abs" style="left:2px;top:176px;width:1px;height:609px;background:#272727"></div></div>
</div>

<!-- page scrollbar + top shadow -->
<div id="sbar"><div id="sthumb"></div></div>
<div id="topshadow"></div>
</body>
</html>
